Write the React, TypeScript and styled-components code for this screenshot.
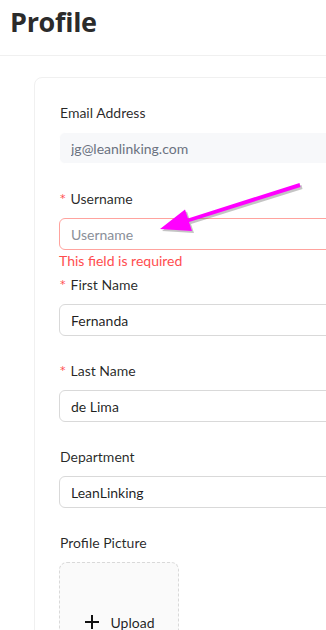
import React from "react";
import styled, { createGlobalStyle } from "styled-components";

const GlobalStyle = createGlobalStyle`
  html, body {
    margin: 0;
    padding: 0;
    background: #ffffff;
    overflow: hidden;
  }
  body {
    font-family: Lato, "Open Sans", sans-serif;
    color: rgba(0, 0, 0, 0.88);
  }
`;

type Field = {
  label: string;
  required?: boolean;
  value?: string;
  placeholder?: string;
  error?: string;
  disabled?: boolean;
};

const fields: Field[] = [
  { label: "Email Address", value: "jg@leanlinking.com", disabled: true },
  { label: "Username", required: true, placeholder: "Username", error: "This field is required" },
  { label: "First Name", required: true, value: "Fernanda" },
  { label: "Last Name", required: true, value: "de Lima" },
  { label: "Department", value: "LeanLinking" },
];

const App: React.FC = () => {
  return (
    <Page>
      <GlobalStyle />
      <Header>
        <Title>Profile</Title>
      </Header>
      <Content>
        <Card>
          {fields.map((f) => (
            <FormItem key={f.label} $hasError={!!f.error}>
              <Label>
                {f.required && <Star>*</Star>}
                {f.label}
              </Label>
              <Input
                $error={!!f.error}
                $disabled={!!f.disabled}
                defaultValue={f.value}
                placeholder={f.placeholder}
                readOnly={f.disabled}
              />
              {f.error && <Explain>{f.error}</Explain>}
            </FormItem>
          ))}
          <FormItem>
            <Label>Profile Picture</Label>
            <UploadBox>
              <svg width="16" height="16" viewBox="0 0 16 16">
                <path d="M8 1v14M1 8h14" stroke="#111" strokeWidth="2" />
              </svg>
              <span>Upload</span>
            </UploadBox>
          </FormItem>
        </Card>
      </Content>
      <Arrow width="326" height="630" viewBox="0 0 326 630">
        <g transform="translate(2 2)" opacity="0.35">
          <polygon points="299.5,183 300.5,187 189,222 192,231 160,229 185,209.5 188,218.5" fill="#555" />
        </g>
        <polygon points="299.5,183 300.5,187 189,222 192,231 160,229 185,209.5 188,218.5" fill="#ff00ff" />
      </Arrow>
    </Page>
  );
};

const Page = styled.div`
  position: relative;
  width: 326px;
  height: 630px;
  overflow: hidden;
`;

const Header = styled.header`
  height: 56px;
  box-sizing: border-box;
  border-bottom: 1px solid #f0f0f0;
  padding-left: 10px;
  display: flex;
  align-items: center;
`;

const Title = styled.h1`
  margin: 0;
  font-family: "Open Sans", sans-serif;
  font-size: 27px;
  font-weight: 700;
  color: #2b2b2b;
  letter-spacing: -0.3px;
  line-height: 1;
  padding-bottom: 12px;
`;

const Content = styled.main`
  padding: 21px 0 0 34px;
`;

const Card = styled.section`
  width: 700px;
  border: 1px solid #f0f0f0;
  border-radius: 8px;
  padding: 24px;
  background: #fff;
`;

const FormItem = styled.div<{ $hasError?: boolean }>`
  display: flex;
  flex-direction: column;
  margin-bottom: ${(p) => (p.$hasError ? "0" : "24px")};
`;

const Label = styled.label`
  display: block;
  height: 22px;
  line-height: 21px;
  margin-bottom: 8px;
  font-size: 14px;
  color: rgba(0, 0, 0, 0.85);
  padding-left: 1px;
  overflow: hidden;
`;

const Star = styled.span`
  color: #ff4d4f;
  margin-right: 5px;
  font-family: "DejaVu Sans", sans-serif;
  font-size: 11px;
  vertical-align: top;
`;

const Input = styled.input<{ $error: boolean; $disabled: boolean }>`
  box-sizing: border-box;
  height: 32px;
  width: 100%;
  padding: 4px 11px;
  font-family: Lato, "Open Sans", sans-serif;
  font-size: 14px;
  line-height: 22px;
  border-radius: 6px;
  outline: none;
  border: 1px solid
    ${(p) => (p.$error ? "#ffa39e" : p.$disabled ? "#ffffff" : "#d9d9d9")};
  background: ${(p) => (p.$disabled ? "#f7f8fa" : "#ffffff")};
  color: ${(p) => (p.$disabled ? "#6b7280" : "rgba(0, 0, 0, 0.88)")};

  &::placeholder {
    color: #8a8f99;
  }
`;

const Explain = styled.div`
  height: 24px;
  font-size: 14px;
  line-height: 22px;
  color: #ff4d4f;
`;

const UploadBox = styled.div`
  box-sizing: border-box;
  width: 120px;
  height: 120px;
  border: 1px dashed #d9d9d9;
  border-radius: 8px;
  background: #fafafa;
  display: flex;
  align-items: center;
  justify-content: center;
  gap: 11px;
  font-size: 14px;
  color: rgba(0, 0, 0, 0.88);
`;

const Arrow = styled.svg`
  position: absolute;
  left: 0;
  top: 0;
  pointer-events: none;
`;

export default App;
